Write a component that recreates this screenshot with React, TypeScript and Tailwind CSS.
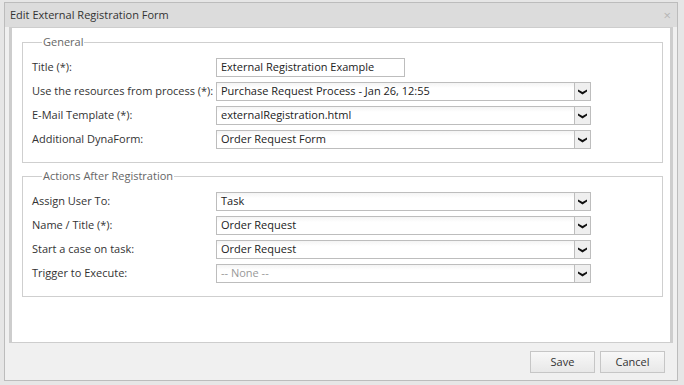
import React from "react";

const font = { fontFamily: "'Open Sans', 'DejaVu Sans', sans-serif" };

function Chevron() {
  return (
    <svg width="9" height="6" viewBox="0 0 9 6" className="block">
      <path d="M0 0.5 L4.5 3 L9 0.5 L9 2.5 L4.5 5.5 L0 2.5 Z" fill="#111" />
    </svg>
  );
}

function Select({ value, muted }: { value: string; muted?: boolean }) {
  return (
    <div className="flex h-[19px] w-[375px] border border-[#bdbdbd] bg-gradient-to-b from-[#f4f4f4] to-white to-[30%]">
      <div className={`flex-1 flex items-center pl-[4px] text-[11px] ${muted ? "text-[#999]" : "text-[#222]"}`}>
        {value}
      </div>
      <div className="w-[16px] border-l border-[#bdbdbd] bg-[#efefef] flex items-center justify-center">
        <Chevron />
      </div>
    </div>
  );
}

function Row({ label, children }: { label: string; children: React.ReactNode }) {
  return (
    <div className="flex items-center h-[19px]">
      <div className="w-[184px] text-[11px] text-[#333]">{label}</div>
      {children}
    </div>
  );
}

function Group({ title, children }: { title: string; children: React.ReactNode }) {
  return (
    <fieldset className="border border-[#cfcfcf] pl-[9px] pt-[9px] pb-[13px] flex flex-col gap-[5px]">
      <legend className="ml-[10px] px-[1px] text-[11px] text-[#666] leading-[14px]">{title}</legend>
      {children}
    </fieldset>
  );
}

export default function App() {
  return (
    <div className="w-[684px] h-[385px] bg-[#e6e6e6] overflow-hidden pt-[2px] pl-[4px]" style={font}>
      <div className="w-[674px] h-[379px] border border-[#bcbcbc] bg-[#f0f0f0] flex flex-col">
        {/* title bar */}
        <div className="h-[24px] bg-[#dcdcdc] flex items-center justify-between pl-[5px] pr-[6px]">
          <span className="text-[11px] text-[#333]">Edit External Registration Form</span>
          <span className="text-[13px] text-[#b5b5b5] leading-none">×</span>
        </div>

        {/* content */}
        <div className="mx-[4px] h-[316px] border border-[#cdcdcd] border-l-[3px] border-r-[3px] bg-white pt-[7px] pl-[10px] pr-[7px] flex flex-col gap-[6px]">
          <Group title="General">
            <Row label="Title (*):">
              <div className="h-[19px] w-[189px] border border-[#bdbdbd] flex items-center pl-[4px] text-[11px] text-[#222]">
                External Registration Example
              </div>
            </Row>
            <Row label="Use the resources from process (*):">
              <Select value="Purchase Request Process - Jan 26, 12:55" />
            </Row>
            <Row label="E-Mail Template (*):">
              <Select value="externalRegistration.html" />
            </Row>
            <Row label="Additional DynaForm:">
              <Select value="Order Request Form" />
            </Row>
          </Group>

          <Group title="Actions After Registration">
            <Row label="Assign User To:">
              <Select value="Task" />
            </Row>
            <Row label="Name / Title (*):">
              <Select value="Order Request" />
            </Row>
            <Row label="Start a case on task:">
              <Select value="Order Request" />
            </Row>
            <Row label="Trigger to Execute:">
              <Select value="-- None --" muted />
            </Row>
          </Group>
        </div>

        {/* footer */}
        <div className="flex justify-end gap-[5px] pr-[12px] pt-[8px]">
          <button className="w-[65px] h-[22px] border border-[#c6c6c6] bg-gradient-to-b from-[#f8f8f8] to-[#e8e8e8] text-[11px] text-[#333]">
            Save
          </button>
          <button className="w-[65px] h-[22px] border border-[#c6c6c6] bg-gradient-to-b from-[#f8f8f8] to-[#e8e8e8] text-[11px] text-[#333]">
            Cancel
          </button>
        </div>
      </div>
    </div>
  );
}
